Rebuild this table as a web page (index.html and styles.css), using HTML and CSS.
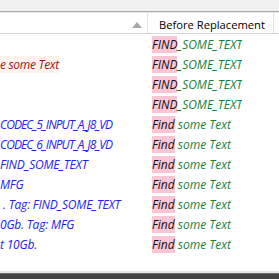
FILE: index.html
```html
<!DOCTYPE html>
<html>
<head>
<meta charset="utf-8">
<link rel="stylesheet" href="styles.css">
</head>
<body>
<div class="app">
  <div class="toolbar"></div>
  <div class="header">
    <div class="hcell hleft">
      <svg class="sort" width="10" height="6" viewBox="0 0 10 6"><polygon points="5,0 10,6 0,6" fill="#a8a8a8"/></svg>
    </div>
    <div class="hcell hright">Before Replacement</div>
    <div class="hcell hrest"></div>
  </div>
  <div class="rows">
    <div class="row"><div class="left"></div><div class="right"><span class="hl">FIND</span><span class="rest">_SOME_TEXT</span></div></div>
    <div class="row"><div class="left"><span class="red">e some Text</span></div><div class="right"><span class="hl">FIND</span><span class="rest">_SOME_TEXT</span></div></div>
    <div class="row"><div class="left"></div><div class="right"><span class="hl">FIND</span><span class="rest">_SOME_TEXT</span></div></div>
    <div class="row"><div class="left"></div><div class="right"><span class="hl">FIND</span><span class="rest">_SOME_TEXT</span></div></div>
    <div class="row"><div class="left"><span class="blue tight">CODEC_5_INPUT_A_J8_VD</span></div><div class="right"><span class="hl">Find</span><span class="rest"> some Text</span></div></div>
    <div class="row"><div class="left"><span class="blue tight">CODEC_6_INPUT_A_J8_VD</span></div><div class="right"><span class="hl">Find</span><span class="rest"> some Text</span></div></div>
    <div class="row"><div class="left"><span class="blue">FIND_SOME_TEXT</span></div><div class="right"><span class="hl">Find</span><span class="rest"> some Text</span></div></div>
    <div class="row"><div class="left"><span class="blue">MFG</span></div><div class="right"><span class="hl">Find</span><span class="rest"> some Text</span></div></div>
    <div class="row"><div class="left"><span class="blue inset">. Tag: FIND_SOME_TEXT</span></div><div class="right"><span class="hl">Find</span><span class="rest"> some Text</span></div></div>
    <div class="row"><div class="left"><span class="blue">0Gb. Tag: MFG</span></div><div class="right"><span class="hl">Find</span><span class="rest"> some Text</span></div></div>
    <div class="row"><div class="left"><span class="blue">t 10Gb.</span></div><div class="right"><span class="hl">Find</span><span class="rest"> some Text</span></div></div>
  </div>
  <div class="spacer"></div>
  <div class="footer"></div>
</div>
</body>
</html>
```
FILE: styles.css
```css
html, body {
  margin: 0;
  padding: 0;
  background: #ffffff;
}
.app {
  width: 279px;
  height: 279px;
  overflow: hidden;
  display: flex;
  flex-direction: column;
  font-family: "Open Sans", "Noto Sans", sans-serif;
  font-size: 12px;
}
.toolbar {
  height: 11px;
  background: #f0f0f0;
  border-bottom: 1px solid #ababab;
  flex: none;
}
.header {
  flex: none;
  height: 20px;
  display: flex;
  border-top: 1px solid #e6e6e6;
  border-bottom: 1px solid #d5d5d5;
  background: #ffffff;
}
.hcell {
  display: flex;
  align-items: center;
  box-sizing: border-box;
  padding-top: 2px;
}
.hleft {
  width: 148px;
  border-right: 1px solid #e3e3e3;
  justify-content: flex-end;
  padding-right: 5px;
  padding-top: 3px;
}
.sort {
  display: block;
}
.hright {
  width: 126px;
  border-right: 1px solid #e3e3e3;
  padding-left: 11px;
  color: #000000;
  font-size: 11.2px;
  white-space: nowrap;
  overflow: hidden;
}
.hrest {
  flex: 1;
}
.rows {
  flex: none;
  display: flex;
  flex-direction: column;
}
.row {
  height: 20px;
  display: flex;
  align-items: center;
  font-style: italic;
  white-space: nowrap;
}
.left {
  width: 148px;
  overflow: hidden;
  flex: none;
}
.right {
  padding-left: 4px;
  overflow: hidden;
}
.hl {
  background: #fac6d6;
  color: #111111;
}
.rest {
  color: #17803a;
}
.red {
  color: #a3131b;
  background: #fcf3ec;
  letter-spacing: -0.3px;
}
.blue {
  color: #2323f0;
  letter-spacing: -0.2px;
}
.tight {
  letter-spacing: -0.9px;
}
.inset {
  display: inline-block;
  padding-left: 3px;
}
.spacer {
  flex: 1;
}
.footer {
  flex: none;
  height: 5px;
  background: #444444;
  border-top: 1px solid #707070;
  box-shadow: 0 -2px 0 #e6e6e6;
}
```
